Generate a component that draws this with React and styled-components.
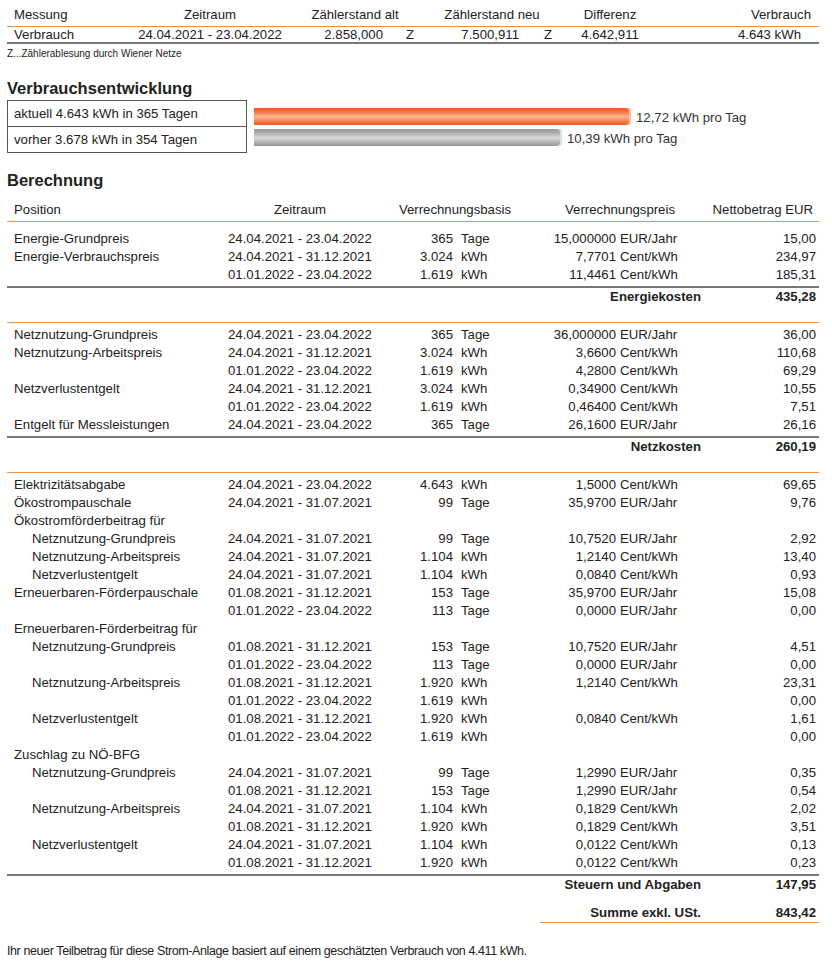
import React from 'react';
import styled, { createGlobalStyle } from 'styled-components';

const Global = createGlobalStyle`
  html, body { margin: 0; padding: 0; background: #fff; }
  body {
    font-family: "Liberation Sans", Arial, Helvetica, sans-serif;
    color: #222;
    font-size: 13.2px;
  }
`;

const ORANGE = '#f7903c';
const GRAY = '#777';

const Page = styled.div`
  width: 812px;
  padding: 6px 0 0 7px;
`;

/* ---------- Zählerstand table ---------- */
const MeterGrid = styled.div`
  display: grid;
  grid-template-columns: 123px 160px 110px 20px 110px 34px 92px 1fr;
  white-space: nowrap;
`;
const MeterHead = styled(MeterGrid)`
  height: 20px;
  line-height: 18px;
  border-bottom: 1px solid ${ORANGE};
`;
const MeterRow = styled(MeterGrid)`
  height: 15px;
  line-height: 15px;
  border-bottom: 2px solid ${GRAY};
`;
const Cell = styled.div`
  grid-column: span ${(p) => p.$span || 1};
  text-align: ${(p) => p.$align || 'left'};
  padding-left: ${(p) => p.$pl || 0}px;
  padding-right: ${(p) => p.$pr || 0}px;
`;
const Footnote = styled.div`
  font-size: 10px;
  line-height: 12px;
  margin-top: 4px;
`;

/* ---------- headings ---------- */
const Heading = styled.h2`
  margin: ${(p) => p.$top}px 0 0 0;
  font-size: 16.5px;
  line-height: 20px;
  font-weight: 700;
  color: #222;
`;

/* ---------- Verbrauchsentwicklung ---------- */
const Trend = styled.div`
  display: flex;
  margin-top: 2px;
`;
const TrendBox = styled.div`
  width: 238px;
  border: 1px solid #555;
`;
const TrendLine = styled.div`
  height: 25px;
  line-height: 25px;
  padding-left: 6px;
  & + & { border-top: 1px solid #555; }
`;
const Bars = styled.div`
  display: flex;
  flex-direction: column;
  gap: 4px;
  padding-top: 8px;
  margin-left: 7px;
`;
const BarRow = styled.div`
  display: flex;
  align-items: center;
  height: 17px;
`;
const Bar = styled.div`
  height: 17px;
  border-radius: 0 4px 4px 0;
  background: ${(p) =>
    p.$tone === 'orange'
      ? 'linear-gradient(to bottom, #ee5a24 0%, #f3743d 22%, #fab596 52%, #f47b46 80%, #ee5d27 100%)'
      : 'linear-gradient(to bottom, #9a9a9a 0%, #adadad 22%, #dadada 52%, #b0b0b0 80%, #979797 100%)'};
  box-shadow: inset -2px 0 0 ${(p) => (p.$tone === 'orange' ? '#fbc1a6' : '#e0e0e0')};
`;
const BarLabel = styled.span`
  margin-left: 5px;
  padding-top: 2px;
  color: #333;
  white-space: nowrap;
`;

/* ---------- Berechnung ---------- */
const CalcGrid = styled.div`
  display: grid;
  grid-template-columns: 221px 150px 75px 84px 79px 87px 1fr;
  white-space: nowrap;
  height: 18px;
  line-height: 18px;
`;
const CalcHead = styled(CalcGrid)`
  margin-top: 11px;
  padding-bottom: 2px;
  border-bottom: 1px solid ${ORANGE};
`;
const Section = styled.div`
  padding-top: ${(p) => (p.$first ? 8 : 3)}px;
  padding-bottom: 2px;
  border-top: ${(p) => (p.$first ? 'none' : `1px solid ${ORANGE}`)};
  border-bottom: 2px solid ${GRAY};
`;
const Subtotal = styled(CalcGrid)`
  font-weight: 700;
  margin-bottom: ${(p) => (p.$last ? 0 : 16)}px;
`;
const SumRow = styled.div`
  display: flex;
  margin: 10px 0 0 533px;
  height: 18px;
  line-height: 18px;
  font-weight: 700;
  border-bottom: 1px solid ${ORANGE};
  white-space: nowrap;
`;
const SumLabel = styled.div`
  width: 161px;
  text-align: right;
`;
const SumValue = styled.div`
  flex: 1;
  text-align: right;
  padding-right: 3px;
`;
const Footer = styled.div`
  margin-top: 21px;
  font-size: 12.5px;
  letter-spacing: -0.4px;
  line-height: 14px;
  color: #222;
`;

const sections = [
  {
    total: ['Energiekosten', '435,28'],
    rows: [
      ['Energie-Grundpreis', '24.04.2021 - 23.04.2022', '365', 'Tage', '15,000000', 'EUR/Jahr', '15,00'],
      ['Energie-Verbrauchspreis', '24.04.2021 - 31.12.2021', '3.024', 'kWh', '7,7701', 'Cent/kWh', '234,97'],
      ['', '01.01.2022 - 23.04.2022', '1.619', 'kWh', '11,4461', 'Cent/kWh', '185,31'],
    ],
  },
  {
    total: ['Netzkosten', '260,19'],
    rows: [
      ['Netznutzung-Grundpreis', '24.04.2021 - 23.04.2022', '365', 'Tage', '36,000000', 'EUR/Jahr', '36,00'],
      ['Netznutzung-Arbeitspreis', '24.04.2021 - 31.12.2021', '3.024', 'kWh', '3,6600', 'Cent/kWh', '110,68'],
      ['', '01.01.2022 - 23.04.2022', '1.619', 'kWh', '4,2800', 'Cent/kWh', '69,29'],
      ['Netzverlustentgelt', '24.04.2021 - 31.12.2021', '3.024', 'kWh', '0,34900', 'Cent/kWh', '10,55'],
      ['', '01.01.2022 - 23.04.2022', '1.619', 'kWh', '0,46400', 'Cent/kWh', '7,51'],
      ['Entgelt für Messleistungen', '24.04.2021 - 23.04.2022', '365', 'Tage', '26,1600', 'EUR/Jahr', '26,16'],
    ],
  },
  {
    total: ['Steuern und Abgaben', '147,95'],
    rows: [
      ['Elektrizitätsabgabe', '24.04.2021 - 23.04.2022', '4.643', 'kWh', '1,5000', 'Cent/kWh', '69,65'],
      ['Ökostrompauschale', '24.04.2021 - 31.07.2021', '99', 'Tage', '35,9700', 'EUR/Jahr', '9,76'],
      ['Ökostromförderbeitrag für'],
      ['>Netznutzung-Grundpreis', '24.04.2021 - 31.07.2021', '99', 'Tage', '10,7520', 'EUR/Jahr', '2,92'],
      ['>Netznutzung-Arbeitspreis', '24.04.2021 - 31.07.2021', '1.104', 'kWh', '1,2140', 'Cent/kWh', '13,40'],
      ['>Netzverlustentgelt', '24.04.2021 - 31.07.2021', '1.104', 'kWh', '0,0840', 'Cent/kWh', '0,93'],
      ['Erneuerbaren-Förderpauschale', '01.08.2021 - 31.12.2021', '153', 'Tage', '35,9700', 'EUR/Jahr', '15,08'],
      ['', '01.01.2022 - 23.04.2022', '113', 'Tage', '0,0000', 'EUR/Jahr', '0,00'],
      ['Erneuerbaren-Förderbeitrag für'],
      ['>Netznutzung-Grundpreis', '01.08.2021 - 31.12.2021', '153', 'Tage', '10,7520', 'EUR/Jahr', '4,51'],
      ['', '01.01.2022 - 23.04.2022', '113', 'Tage', '0,0000', 'EUR/Jahr', '0,00'],
      ['>Netznutzung-Arbeitspreis', '01.08.2021 - 31.12.2021', '1.920', 'kWh', '1,2140', 'Cent/kWh', '23,31'],
      ['', '01.01.2022 - 23.04.2022', '1.619', 'kWh', '', '', '0,00'],
      ['>Netzverlustentgelt', '01.08.2021 - 31.12.2021', '1.920', 'kWh', '0,0840', 'Cent/kWh', '1,61'],
      ['', '01.01.2022 - 23.04.2022', '1.619', 'kWh', '', '', '0,00'],
      ['Zuschlag zu NÖ-BFG'],
      ['>Netznutzung-Grundpreis', '24.04.2021 - 31.07.2021', '99', 'Tage', '1,2990', 'EUR/Jahr', '0,35'],
      ['', '01.08.2021 - 31.12.2021', '153', 'Tage', '1,2990', 'EUR/Jahr', '0,54'],
      ['>Netznutzung-Arbeitspreis', '24.04.2021 - 31.07.2021', '1.104', 'kWh', '0,1829', 'Cent/kWh', '2,02'],
      ['', '01.08.2021 - 31.12.2021', '1.920', 'kWh', '0,1829', 'Cent/kWh', '3,51'],
      ['>Netzverlustentgelt', '24.04.2021 - 31.07.2021', '1.104', 'kWh', '0,0122', 'Cent/kWh', '0,13'],
      ['', '01.08.2021 - 31.12.2021', '1.920', 'kWh', '0,0122', 'Cent/kWh', '0,23'],
    ],
  },
];

const trend = [
  { text: 'aktuell 4.643 kWh in 365 Tagen', perDay: 12.72, label: '12,72 kWh pro Tag', tone: 'orange' },
  { text: 'vorher 3.678 kWh in 354 Tagen', perDay: 10.39, label: '10,39 kWh pro Tag', tone: 'gray' },
];
const MAX_BAR = 377;

function CalcRow({ row }) {
  const [pos = '', period = '', qty = '', unit = '', price = '', priceUnit = '', amount = ''] = row;
  const indent = pos.startsWith('>');
  const name = indent ? pos.slice(1) : pos;
  return (
    <CalcGrid>
      <Cell $pl={indent ? 25 : 7}>{name}</Cell>
      <Cell>{period}</Cell>
      <Cell $align="right">{qty}</Cell>
      <Cell $pl={8}>{unit}</Cell>
      <Cell $align="right">{price}</Cell>
      <Cell $pl={4}>{priceUnit}</Cell>
      <Cell $align="right" $pr={3}>{amount}</Cell>
    </CalcGrid>
  );
}

export default function App() {
  const maxPerDay = Math.max(...trend.map((t) => t.perDay));
  return (
    <>
      <Global />
      <Page>
        <MeterHead>
          <Cell $pl={7}>Messung</Cell>
          <Cell $align="center">Zeitraum</Cell>
          <Cell $span={2} $align="center">Zählerstand alt</Cell>
          <Cell $span={2} $align="center">Zählerstand neu</Cell>
          <Cell $align="center">Differenz</Cell>
          <Cell $align="right" $pr={8}>Verbrauch</Cell>
        </MeterHead>
        <MeterRow>
          <Cell $pl={7}>Verbrauch</Cell>
          <Cell $align="center">24.04.2021 - 23.04.2022</Cell>
          <Cell $align="right" $pr={17}>2.858,000</Cell>
          <Cell $pl={6}>Z</Cell>
          <Cell $align="right" $pr={11}>7.500,911</Cell>
          <Cell $pl={14}>Z</Cell>
          <Cell $align="center">4.642,911</Cell>
          <Cell $align="right" $pr={18}>4.643 kWh</Cell>
        </MeterRow>
        <Footnote>Z...Zählerablesung durch Wiener Netze</Footnote>

        <Heading $top={18}>Verbrauchsentwicklung</Heading>
        <Trend>
          <TrendBox>
            {trend.map((t) => (
              <TrendLine key={t.text}>{t.text}</TrendLine>
            ))}
          </TrendBox>
          <Bars>
            {trend.map((t) => (
              <BarRow key={t.label}>
                <Bar $tone={t.tone} style={{ width: `${Math.round((t.perDay / maxPerDay) * MAX_BAR)}px` }} />
                <BarLabel>{t.label}</BarLabel>
              </BarRow>
            ))}
          </Bars>
        </Trend>

        <Heading $top={17}>Berechnung</Heading>
        <CalcHead>
          <Cell $pl={7}>Position</Cell>
          <Cell $align="center" $pr={6}>Zeitraum</Cell>
          <Cell $span={2} $align="center" $pr={5}>Verrechnungsbasis</Cell>
          <Cell $span={2} $align="center">Verrechnungspreis</Cell>
          <Cell $align="right" $pr={6}>Nettobetrag EUR</Cell>
        </CalcHead>

        {sections.map((s, i) => (
          <React.Fragment key={s.total[0]}>
            <Section $first={i === 0}>
              {s.rows.map((r, j) => (
                <CalcRow key={j} row={r} />
              ))}
            </Section>
            <Subtotal $last={i === sections.length - 1}>
              <Cell $span={6} $align="right" $pr={2}>{s.total[0]}</Cell>
              <Cell $align="right" $pr={3}>{s.total[1]}</Cell>
            </Subtotal>
          </React.Fragment>
        ))}

        <SumRow>
          <SumLabel>Summe exkl. USt.</SumLabel>
          <SumValue>843,42</SumValue>
        </SumRow>

        <Footer>
          Ihr neuer Teilbetrag für diese Strom-Anlage basiert auf einem geschätzten Verbrauch von 4.411 kWh.
        </Footer>
      </Page>
    </>
  );
}
